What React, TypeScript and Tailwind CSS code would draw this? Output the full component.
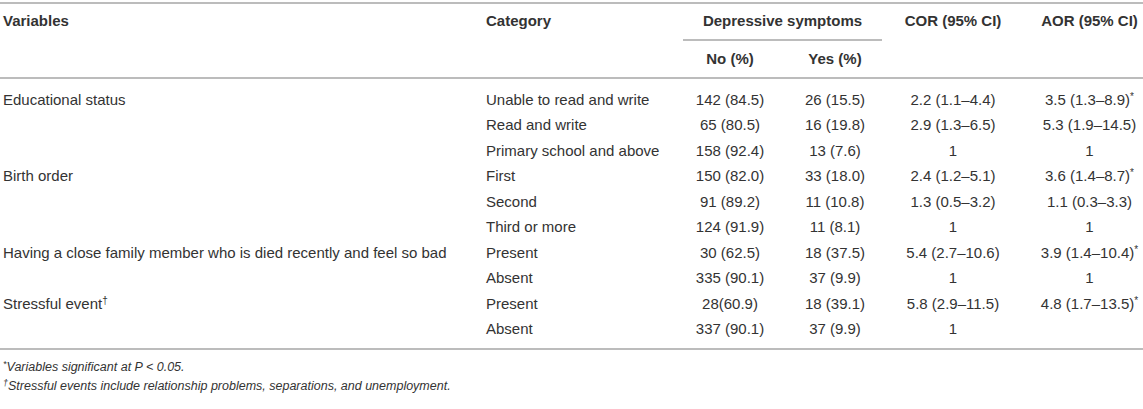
type Row = {
  variable?: React.ReactNode;
  category: string;
  no: string;
  yes: string;
  cor: string;
  aor?: string;
  sig?: boolean;
};

const rows: Row[] = [
  { variable: 'Educational status', category: 'Unable to read and write', no: '142 (84.5)', yes: '26 (15.5)', cor: '2.2 (1.1–4.4)', aor: '3.5 (1.3–8.9)', sig: true },
  { category: 'Read and write', no: '65 (80.5)', yes: '16 (19.8)', cor: '2.9 (1.3–6.5)', aor: '5.3 (1.9–14.5)' },
  { category: 'Primary school and above', no: '158 (92.4)', yes: '13 (7.6)', cor: '1', aor: '1' },
  { variable: 'Birth order', category: 'First', no: '150 (82.0)', yes: '33 (18.0)', cor: '2.4 (1.2–5.1)', aor: '3.6 (1.4–8.7)', sig: true },
  { category: 'Second', no: '91 (89.2)', yes: '11 (10.8)', cor: '1.3 (0.5–3.2)', aor: '1.1 (0.3–3.3)' },
  { category: 'Third or more', no: '124 (91.9)', yes: '11 (8.1)', cor: '1', aor: '1' },
  { variable: 'Having a close family member who is died recently and feel so bad', category: 'Present', no: '30 (62.5)', yes: '18 (37.5)', cor: '5.4 (2.7–10.6)', aor: '3.9 (1.4–10.4)', sig: true },
  { category: 'Absent', no: '335 (90.1)', yes: '37 (9.9)', cor: '1', aor: '1' },
  {
    variable: (
      <>
        Stressful event<sup className="text-[10px]">†</sup>
      </>
    ),
    category: 'Present', no: '28(60.9)', yes: '18 (39.1)', cor: '5.8 (2.9–11.5)', aor: '4.8 (1.7–13.5)', sig: true,
  },
  { category: 'Absent', no: '337 (90.1)', yes: '37 (9.9)', cor: '1' },
];

const cols = 'grid grid-cols-[486px_194px_100px_110px_126px_127px]';

export default function App() {
  return (
    <div className="w-[1143px] h-[409px] bg-white text-[#333] text-[15px] pt-[2px]" style={{ fontFamily: '"Liberation Sans", Arial, sans-serif' }}>
      <div className="border-t-2 border-[#bcbcbc]">
        {/* header */}
        <div className={`${cols} h-[35px] items-center font-bold`}>
          <div className="pl-[3px]">Variables</div>
          <div>Category</div>
          <div className="col-span-2 self-stretch flex">
            <div className="flex-1 ml-[3px] mr-[8px] flex items-center justify-center">Depressive symptoms</div>
          </div>
          <div className="text-center">COR (95% CI)</div>
          <div className="text-center pl-5">AOR (95% CI)</div>
        </div>
        <div className={`${cols} font-bold`}>
          <div />
          <div />
          <div className="col-span-2 h-[2px] ml-[3px] mr-[8px] bg-[#bcbcbc]" />
          <div />
          <div />
        </div>
        <div className={`${cols} h-[38px] items-center font-bold border-b-2 border-[#bcbcbc]`}>
          <div />
          <div />
          <div className="text-center">No (%)</div>
          <div className="text-center">Yes (%)</div>
          <div />
          <div />
        </div>

        {/* body */}
        <div className="pt-[8px] pb-[6px] border-b-2 border-[#bcbcbc]">
          {rows.map((r, i) => (
            <div key={i} className={`${cols} h-[25.5px] items-center`}>
              <div className="pl-[3px] whitespace-nowrap">{r.variable}</div>
              <div className="whitespace-nowrap">{r.category}</div>
              <div className="text-center">{r.no}</div>
              <div className="text-center">{r.yes}</div>
              <div className="text-center">{r.cor}</div>
              <div className="text-center pl-5 whitespace-nowrap">
                {r.aor}
                {r.sig && <sup className="text-[10px]">*</sup>}
              </div>
            </div>
          ))}
        </div>
      </div>

      {/* footnotes */}
      <div className="pt-[8px] pl-[3px] italic text-[12.5px] leading-[19px]">
        <div>
          <sup className="text-[9px]">*</sup>Variables significant at P &lt; 0.05.
        </div>
        <div>
          <sup className="text-[9px]">†</sup>Stressful events include relationship problems, separations, and unemployment.
        </div>
      </div>
    </div>
  );
}
